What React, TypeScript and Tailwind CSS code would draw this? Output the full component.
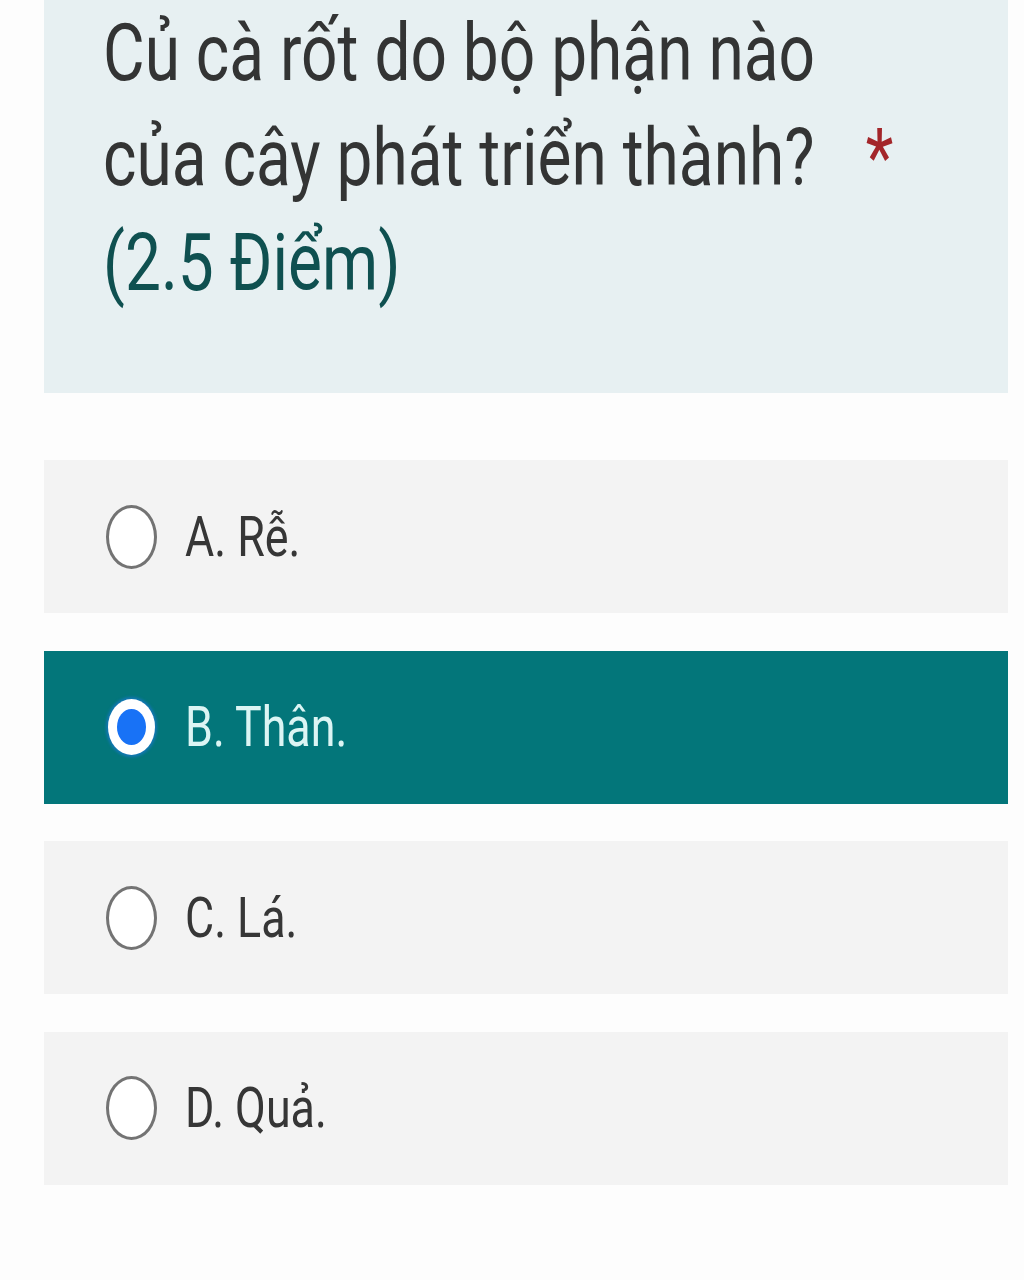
const options = [
  { key: 'A', label: 'A. Rễ.', selected: false },
  { key: 'B', label: 'B. Thân.', selected: true },
  { key: 'C', label: 'C. Lá.', selected: false },
  { key: 'D', label: 'D. Quả.', selected: false },
];

function Line({ children, className = '' }: { children: React.ReactNode; className?: string }) {
  // the reference is horizontally squeezed, so the text is scaled on x
  return (
    <div className={`origin-left scale-x-[0.8] whitespace-nowrap ${className}`}>{children}</div>
  );
}

function Radio({ selected }: { selected: boolean }) {
  if (selected) {
    return (
      <div className="flex h-[56px] w-[47px] shrink-0 items-center justify-center rounded-[50%] bg-white shadow-[0_0_3px_2px_rgba(40,120,255,0.45)] ml-[2px] mr-[30px]">
        <div className="h-[36px] w-[29px] rounded-[50%] bg-[#1872f6]" />
      </div>
    );
  }
  return <div className="h-[64px] w-[51px] shrink-0 rounded-[50%] border-[3px] border-[#737373] bg-white mr-[28px]" />;
}

export default function App() {
  return (
    <div className="min-h-[1280px] bg-[#fdfdfd] px-[44px] pr-[16px]" style={{ fontFamily: 'Roboto, "Noto Sans", sans-serif' }}>
      {/* Question header */}
      <div className="bg-[#e7f0f2] pl-[59px] pb-[77px] pt-[1px] text-[80px] leading-[105px] text-[#333434]">
        <Line>Củ cà rốt do bộ phận nào</Line>
        <Line>
          của cây phát triển thành?<span className="ml-[64px] text-[#a3262a]">*</span>
        </Line>
        <Line className="text-[#0f5050]">(2.5 Điểm)</Line>
      </div>

      {/* Answers */}
      <div className="mt-[67px] flex flex-col gap-[37.5px]">
        {options.map((o) => (
          <div
            key={o.key}
            className={`flex h-[153px] items-center pl-[62px] ${o.selected ? 'bg-[#03767a]' : 'bg-[#f3f3f3]'}`}
          >
            <Radio selected={o.selected} />
            <Line className={`text-[56px] leading-none ${o.selected ? 'text-[#dcf5f4]' : 'text-[#363636]'}`}>
              {o.label}
            </Line>
          </div>
        ))}
      </div>
    </div>
  );
}
